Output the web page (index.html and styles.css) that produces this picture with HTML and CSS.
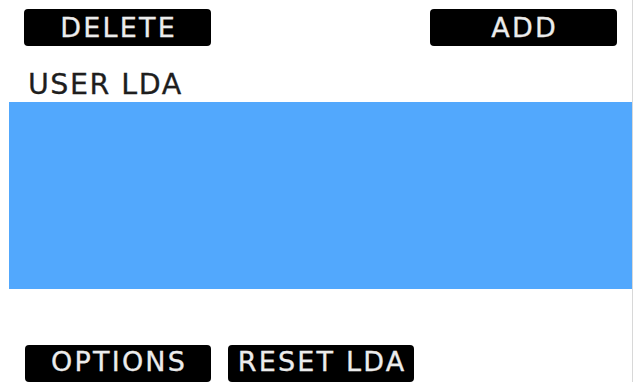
FILE: index.html
```html
<!DOCTYPE html>
<html>
<head>
<meta charset="utf-8">
<link rel="stylesheet" href="styles.css">
</head>
<body>
<div class="screen">
  <div class="top-bar">
    <div class="btn">DELETE</div>
    <div class="btn">ADD</div>
  </div>
  <div class="title">USER LDA</div>
  <div class="list"></div>
  <div class="bottom-bar">
    <div class="btn">OPTIONS</div>
    <div class="btn">RESET LDA</div>
  </div>
</div>
</body>
</html>
```
FILE: styles.css
```css
html, body {
  margin: 0;
  padding: 0;
  background: #ffffff;
}
body {
  width: 635px;
  height: 382px;
  overflow: hidden;
  font-family: "DejaVu Sans", Roboto, sans-serif;
}
.screen {
  width: 632px;
  height: 382px;
  border-right: 1px solid #d8d8d8;
  display: flex;
  flex-direction: column;
}
.top-bar {
  display: flex;
  justify-content: space-between;
  padding: 9px 15px 0 24px;
}
.btn {
  width: 187px;
  height: 37px;
  background: #000;
  color: #ececec;
  border-radius: 4px;
  display: flex;
  align-items: center;
  justify-content: center;
  font-size: 27px;
  letter-spacing: 2.2px;
  text-indent: 2.2px;
  line-height: 1;
  -webkit-text-stroke: 0.3px #ececec;
}
.title {
  margin: 0 0 0 28px;
  height: 56px;
  font-size: 28.5px;
  line-height: 77px;
  color: #1e1e1e;
  letter-spacing: 1.5px;
  -webkit-text-stroke: 0.3px #1e1e1e;
}
.list {
  margin-left: 9px;
  width: 623px;
  height: 188px;
  background: #52a8fd;
}
.bottom-bar {
  display: flex;
  gap: 17px;
  padding: 56px 0 0 25px;
}
.bottom-bar .btn {
  width: 186px;
  align-items: flex-start;
  padding-top: 3px;
  box-sizing: border-box;
}
```
